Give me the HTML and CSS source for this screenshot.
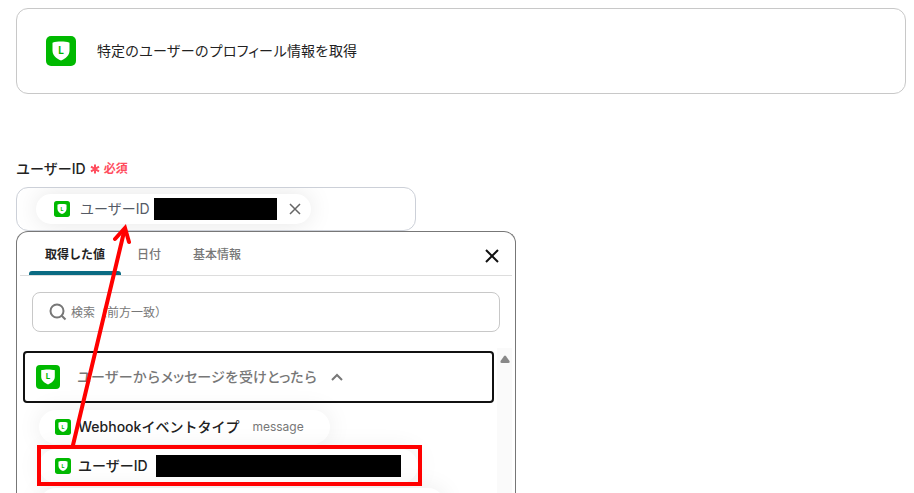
FILE: index.html
```html
<!doctype html>
<html lang="ja">
  <head>
    <meta charset="utf-8">
    <title>特定のユーザーのプロフィール情報を取得</title>
    <link rel="stylesheet" href="styles.css">
  </head>

  <body>
    <section class="card">
      <svg class="app-icon icon-lg" viewBox="0 0 30 30">
        <rect width="30" height="30" rx="5"/>
        <path d="M15 5.500c3 0 6 .3 8 .9.300.1.500.3.500.7v7.400c0 5-3.600 7.800-8.500 10-4.900-2.200-8.500-5-8.500-10V7.100c0-.4.200-.6.500-.7 2-.6 5-.9 8-.9z"/>
        <text x="15" y="18">L</text>
      </svg>
      <span class="title">特定のユーザーのプロ<span class="kern">フィ</span>ール情報を取得</span>
    </section>

    <div class="label">
      <span>ユーザーID</span>
      <svg class="asterisk" viewBox="0 0 10 10"><path d="M5 .5v9M1 2.700l8 4.600M9 2.700L1 7.300"/></svg>
      <span class="required">必須</span>
    </div>

    <div class="field">
      <div class="tag">
        <svg class="app-icon icon-sm" viewBox="0 0 30 30">
          <rect width="30" height="30" rx="5"/>
          <path d="M15 5.500c3 0 6 .3 8 .9.300.1.500.3.500.7v7.400c0 5-3.600 7.800-8.500 10-4.900-2.200-8.500-5-8.500-10V7.100c0-.4.200-.6.500-.7 2-.6 5-.9 8-.9z"/>
          <text x="15" y="18">L</text>
        </svg>
        <span class="tag-name">ユーザーID</span>
        <span class="mask"></span>
        <button class="tag-remove" aria-label="削除">
          <svg viewBox="0 0 12 12"><path d="M1 1l10 10M11 1L1 11"/></svg>
        </button>
      </div>
    </div>

    <div class="panel">
      <div class="tabs">
        <button class="tab active">取得した値</button>
        <button class="tab">日付</button>
        <button class="tab">基本情報</button>
        <button class="close" aria-label="閉じる">
          <svg viewBox="0 0 14 14"><path d="M1 1l12 12M13 1L1 13"/></svg>
        </button>
      </div>

      <div class="search">
        <svg viewBox="0 0 18 18"><circle cx="8" cy="8" r="6.500"/><path d="M12.700 12.700L16.500 16.500"/></svg>
        <input type="text" placeholder="検索（前方一致）" aria-label="検索">
      </div>

      <div class="results">
        <div class="list">
          <button class="group">
            <svg class="app-icon icon-md" viewBox="0 0 30 30">
              <rect width="30" height="30" rx="5"/>
              <path d="M15 5.500c3 0 6 .3 8 .9.300.1.500.3.500.7v7.400c0 5-3.600 7.800-8.500 10-4.900-2.200-8.500-5-8.500-10V7.100c0-.4.200-.6.500-.7 2-.6 5-.9 8-.9z"/>
              <text x="15" y="18">L</text>
            </svg>
            <span class="title">ユーザーから<span class="kern">メッセ</span>ージを受け<span class="kern">とった</span>ら</span>
            <svg class="chevron" viewBox="0 0 12 8"><path d="M1 7l5-5 5 5"/></svg>
          </button>

          <div class="items">
            <div class="item">
              <svg class="app-icon icon-sm" viewBox="0 0 30 30">
                <rect width="30" height="30" rx="5"/>
                <path d="M15 5.500c3 0 6 .3 8 .9.300.1.500.3.500.7v7.400c0 5-3.600 7.800-8.500 10-4.900-2.200-8.500-5-8.500-10V7.100c0-.4.200-.6.500-.7 2-.6 5-.9 8-.9z"/>
                <text x="15" y="18">L</text>
              </svg>
              <span>Webhookイベントタイプ</span>
              <span class="value">message</span>
            </div>
            <div class="item selected">
              <svg class="app-icon icon-sm" viewBox="0 0 30 30">
                <rect width="30" height="30" rx="5"/>
                <path d="M15 5.500c3 0 6 .3 8 .9.300.1.500.3.500.7v7.400c0 5-3.600 7.800-8.500 10-4.900-2.200-8.500-5-8.500-10V7.100c0-.4.200-.6.500-.7 2-.6 5-.9 8-.9z"/>
                <text x="15" y="18">L</text>
              </svg>
              <span>ユーザーID</span>
              <span class="mask wide"></span>
              <div class="highlight"></div>
              <!-- arrow from the highlighted item up to the field -->
              <svg class="arrow" viewBox="0 0 70 224">
                <path d="M12 222L63 9"/>
                <path d="M54 16L64 5L68 19"/>
              </svg>
            </div>
            <div class="item last"></div>
          </div>
        </div>
        <div class="scrollbar">
          <svg viewBox="0 0 10 8"><path d="M4 1.200Q5 0 6 1.200L9.500 6Q10 8 8.500 8H1.500Q0 8 .5 6z"/></svg>
        </div>
      </div>
    </div>
  </body>
</html>
```
FILE: styles.css
```css
* {
  box-sizing: border-box;
}

body {
  display: flex;
  flex-direction: column;
  height: 100vh;
  margin: 0;
  padding: 8px 8px 0 16px;
  overflow: hidden;
  background: #fff;
  color: #222;
  font-family: Inter, "Noto Sans CJK JP", sans-serif;
  font-size: 14px;
  line-height: 20px;
}

button {
  padding: 0;
  border: 0;
  background: none;
  color: inherit;
  font: inherit;
}

svg {
  display: block;
  flex-shrink: 0;
  fill: none;
}

.app-icon rect,
.app-icon text {
  fill: #00b900;
}

.app-icon path {
  fill: #fff;
}

.app-icon text {
  font-size: 10px;
  font-weight: 700;
  text-anchor: middle;
}

.icon-lg {
  width: 30px;
  height: 30px;
}

.icon-md {
  width: 24px;
  height: 24px;
}

.icon-sm {
  width: 16px;
  height: 16px;
}

/* tighten small kana */
.kern {
  font-feature-settings: "palt";
}

.card {
  display: flex;
  align-items: center;
  gap: 21px;
  flex-shrink: 0;
  padding: 27px 29px;
  border: 1px solid #c8c8c8;
  border-radius: 12px;
}

.label {
  display: flex;
  align-items: center;
  margin: 65px 0 8px;
  font-weight: 500;
}

.asterisk {
  width: 10px;
  height: 10px;
  margin: 0 4px;
  stroke: #ff4d5e;
  stroke-width: 2;
}

.required {
  color: #ff4d5e;
  font-size: 12px;
  font-weight: 600;
}

.field {
  flex-shrink: 0;
  width: 400px;
  max-width: 100%;
  padding: 6px 19px;
  border: 1px solid #ccd0d8;
  border-radius: 12px;
  overflow: hidden;
}

.tag {
  display: flex;
  align-items: center;
  width: 275px;
  height: 30px;
  padding: 0 10px 0 18px;
  border-radius: 15px;
  background: #fff;
  box-shadow: 0 0 24px rgba(0, 0, 0, 0.1);
  color: #555b66;
}

.tag-name {
  margin: 0 4px 0 10px;
}

.mask {
  width: 123px;
  height: 22px;
  background: #000;
}

.tag-remove {
  margin-left: auto;
}

.tag-remove svg {
  width: 12px;
  height: 12px;
  stroke: #666;
  stroke-width: 1.5;
}

.panel {
  display: flex;
  flex-direction: column;
  flex: 1;
  width: 500px;
  max-width: 100%;
  min-height: 0;
  padding: 0 3px;
  border: 1px solid #777;
  border-bottom: 0;
  border-radius: 12px 12px 0 0;
  background: #fff;
}

.tabs {
  display: flex;
  flex-shrink: 0;
  height: 44px;
  padding: 0 13px 0 9px;
  border-bottom: 1px solid #ddd;
}

.tab {
  padding: 2px 16px 0;
  color: #777;
  font-size: 12px;
  font-weight: 500;
}

.tab.active {
  position: relative;
  color: #222;
  font-weight: 600;
}

.tab.active::after {
  content: "";
  position: absolute;
  right: 0;
  bottom: 0;
  left: 0;
  height: 4px;
  border-radius: 3px 3px 0 0;
  background: #0b6b83;
}

.close {
  margin: 4px 0 0 auto;
}

.close svg {
  width: 14px;
  height: 14px;
  stroke: #111;
  stroke-width: 2;
}

.search {
  display: flex;
  align-items: center;
  gap: 4px;
  flex-shrink: 0;
  height: 40px;
  margin: 16px 12px;
  padding: 0 16px;
  border: 1px solid #c8c8c8;
  border-radius: 8px;
}

.search svg {
  width: 18px;
  height: 18px;
  stroke: #777;
  stroke-width: 2;
}

.search input {
  flex: 1;
  min-width: 0;
  padding: 2px 0 0;
  border: 0;
  outline: 0;
  font: inherit;
  font-size: 12px;
}

.search input::placeholder {
  color: #777;
  opacity: 1;
}

.results {
  display: flex;
  flex: 1;
  min-height: 0;
}

.list {
  flex: 1;
  padding: 3px 3px 0;
}

.group {
  display: flex;
  align-items: center;
  width: 100%;
  height: 52px;
  padding: 0 11px;
  border: 2px solid #111;
  border-radius: 4px;
  color: #777;
  font-weight: 500;
}

.group .title {
  margin: 0 13px 0 17px;
}

.chevron {
  width: 12px;
  height: 8px;
  stroke: #777;
  stroke-width: 2;
}

.items {
  display: flex;
  flex-direction: column;
  align-items: flex-start;
  gap: 5px;
  padding: 7px 16px;
}

.item {
  display: flex;
  position: relative;
  align-items: center;
  gap: 7px;
  height: 34px;
  padding: 0 26px 0 16px;
  border-radius: 17px;
  background: #fff;
  box-shadow: 0 0 24px rgba(0, 0, 0, 0.08);
  font-weight: 500;
}

.item.selected {
  padding-right: 17px;
}

.item.last {
  width: 406px;
}

.value {
  margin-left: 6px;
  color: #777;
  font-size: 12px;
  font-weight: 400;
}

.mask.wide {
  width: 245px;
  margin-left: 1px;
}

.highlight {
  position: absolute;
  z-index: 1;
  inset: -4px -4px -3px -2px;
  border: 4px solid #f00;
}

.arrow {
  position: absolute;
  z-index: 2;
  bottom: 36px;
  left: 22px;
  width: 70px;
  height: 224px;
  stroke: #f00;
  stroke-width: 4;
  stroke-linecap: round;
}

.scrollbar {
  width: 15px;
  padding: 7px 3px;
  background: #fafafa;
}

.scrollbar svg {
  width: 10px;
  height: 8px;
  fill: #888;
}
```
